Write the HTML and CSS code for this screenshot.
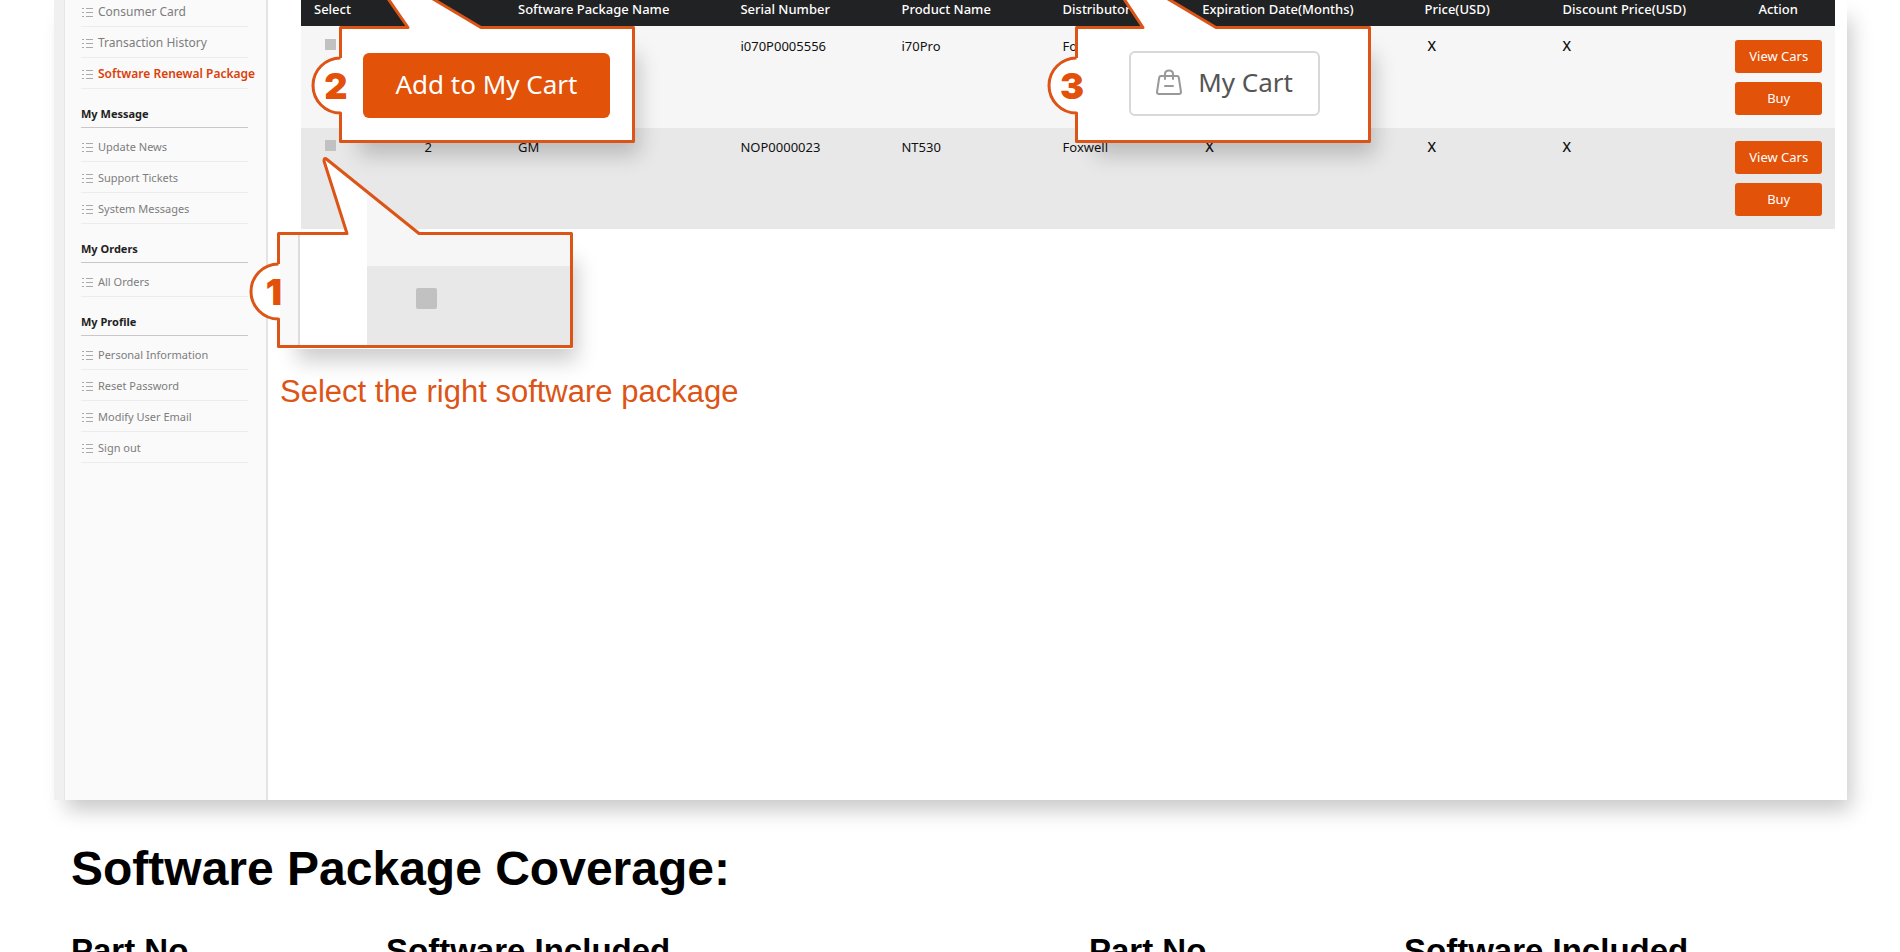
FILE: index.html
```
<!DOCTYPE html>
<html lang="en">
<head>
  <meta charset="UTF-8">
  <meta name="viewport" content="width=device-width, initial-scale=1.0">
  <title>Software Renewal Package</title>
  <link rel="stylesheet" href="styles.css">
</head>
<body>

  <!-- list icon shared by all sidebar links -->
  <svg class="sprite" width="0" height="0">
    <symbol id="list" viewBox="0 0 11 10">
      <path d="M0 1.500h2M0 5.500h2M0 9.500h2M4 1.500h7M4 5.500h7M4 9.500h7" fill="none" stroke="#aaa" stroke-width="1"/>
    </symbol>
  </svg>

  <div class="panel">
    <nav class="sidebar">
      <ul class="large">
        <li><a href="#"><svg><use href="#list"/></svg>Consumer Card</a></li>
        <li><a href="#"><svg><use href="#list"/></svg>Transaction History</a></li>
        <li><a href="#" class="active"><svg><use href="#list"/></svg>Software Renewal Package</a></li>
      </ul>
      <h3>My Message</h3>
      <ul>
        <li><a href="#"><svg><use href="#list"/></svg>Update News</a></li>
        <li><a href="#"><svg><use href="#list"/></svg>Support Tickets</a></li>
        <li><a href="#"><svg><use href="#list"/></svg>System Messages</a></li>
      </ul>
      <h3>My Orders</h3>
      <ul>
        <li><a href="#"><svg><use href="#list"/></svg>All Orders</a></li>
      </ul>
      <h3>My Profile</h3>
      <ul>
        <li><a href="#"><svg><use href="#list"/></svg>Personal Information</a></li>
        <li><a href="#"><svg><use href="#list"/></svg>Reset Password</a></li>
        <li><a href="#"><svg><use href="#list"/></svg>Modify User Email</a></li>
        <li><a href="#"><svg><use href="#list"/></svg>Sign out</a></li>
      </ul>
    </nav>

    <main class="content">
      <table class="packages">
        <colgroup>
          <col class="c-select"><col class="c-num"><col class="c-name"><col class="c-serial"><col class="c-product">
          <col class="c-dist"><col class="c-exp"><col class="c-price"><col class="c-discount"><col class="c-action">
        </colgroup>
        <thead>
          <tr>
            <th>Select</th>
            <th></th>
            <th>Software Package Name</th>
            <th>Serial Number</th>
            <th>Product Name</th>
            <th>Distributor</th>
            <th>Expiration Date(Months)</th>
            <th>Price(USD)</th>
            <th>Discount Price(USD)</th>
            <th class="action">Action</th>
          </tr>
        </thead>
        <tbody>
          <tr>
            <td><input type="checkbox" aria-label="Select package 1"></td>
            <td></td>
            <td></td>
            <td>i070P0005556</td>
            <td>i70Pro</td>
            <td>Foxwell</td>
            <td></td>
            <td class="value">X</td>
            <td class="value last">X</td>
            <td class="action"><button>View Cars</button><button>Buy</button></td>
          </tr>
          <tr>
            <td><input type="checkbox" aria-label="Select package 2"></td>
            <td>2</td>
            <td>GM</td>
            <td>NOP0000023</td>
            <td>NT530</td>
            <td>Foxwell</td>
            <td class="value">X</td>
            <td class="value">X</td>
            <td class="value last">X</td>
            <td class="action"><button>View Cars</button><button>Buy</button></td>
          </tr>
        </tbody>
      </table>
      <p class="hint">Select the right software package</p>
    </main>

    <!-- step callouts, they lie over the table -->
    <div class="callout step-1">
      <svg class="shape" width="296" height="116">
        <path d="M1.500 1.500H70L47-71Q47-75 50-72.500L142 1.500H294.500V114.500H1.500V87A27 27 0 0 1 1.500 32Z" fill="#fff"/>
        <path d="M3 3H21V113H3Z" fill="#f9f9f9"/>
        <path d="M22 3V113" stroke="#ddd" stroke-width="2"/>
        <path d="M90-39L142 2H293V34H90Z" fill="#f6f6f6"/>
        <path d="M90 34H293V113H90Z" fill="#e8e8e8"/>
        <path class="line" d="M1.500 32V1.500H70L47-71Q47-75 50-72.500L142 1.500H294.500V114.500H1.500V87A27 27 0 0 1 1.500 32"/>
      </svg>
      <span class="number">1</span>
      <input type="checkbox" aria-label="Select">
    </div>

    <div class="callout step-2">
      <svg class="shape" width="296" height="117">
        <path class="line fill" d="M1.500 32V1.500H69L43-36H79L142 1.500H294.500V115.500H1.500V87A27 27 0 0 1 1.500 32"/>
      </svg>
      <span class="number">2</span>
      <button class="add">Add to My Cart</button>
    </div>

    <div class="callout step-3">
      <svg class="shape" width="296" height="117">
        <path class="line fill" d="M1.500 32V1.500H68L43-36H78L141 1.500H294.500V115.500H1.500V87A27 27 0 0 1 1.500 32"/>
      </svg>
      <span class="number">3</span>
      <button class="cart">
        <svg width="26" height="27" viewBox="0 0 26 27" fill="none" stroke="#999" stroke-width="2" stroke-linecap="round" stroke-linejoin="round">
          <path d="M5 7H21Q22.500 7 22.800 8.500L25 23Q25 25 23 25H3Q1 25 1 23L3.200 8.500Q3.500 7 5 7Z"/>
          <path d="M9 10V5Q9 1.500 13 1.500T17 5V10M9 17H17"/>
        </svg>
        My Cart
      </button>
    </div>
  </div>

  <section class="coverage">
    <h2>Software Package Coverage:</h2>
    <div class="parts">
      <table>
        <tr><th class="part">Part No</th><th>Software Included</th></tr>
      </table>
      <table>
        <tr><th class="part">Part No</th><th>Software Included</th></tr>
      </table>
    </div>
  </section>

</body>
</html>
```

FILE: styles.css
```
* {
  margin: 0;
  padding: 0;
  box-sizing: border-box;
}

body {
  font-family: 'Noto Sans', 'Open Sans', sans-serif;
  background: #fff;
  color: #111;
}

.sprite {
  position: absolute;
}

a {
  text-decoration: none;
}

button {
  font-family: inherit;
  border: none;
  cursor: pointer;
}

.panel {
  position: relative;
  display: flex;
  min-height: 800px;
  margin: 0 53px 0 54px;
  background: #fff;
  border-left: 10px solid #f0f0f0;
  box-shadow: 8px 14px 20px -4px rgba(0, 0, 0, 0.22);
}

/* sidebar */
.sidebar {
  flex: none;
  width: 204px;
  padding: 0 18px 0 16px;
  background: #fafafa;
  border-left: 1px solid #e6e6e6;
  border-right: 2px solid #e4e4e4;
}

.sidebar ul {
  list-style: none;
  padding-top: 3px;
}

.sidebar ul.large {
  padding-top: 0;
  margin-top: -4px;
}

.sidebar li {
  height: 31px;
  border-bottom: 1px solid #ececec;
}

.sidebar a {
  display: flex;
  align-items: center;
  gap: 5px;
  height: 31px;
  padding-left: 1px;
  font-size: 11px;
  color: #7d7d7d;
  white-space: nowrap;
}

.sidebar .large a {
  font-size: 12px;
}

.sidebar svg {
  flex: none;
  width: 11px;
  height: 10px;
}

.sidebar .large a.active {
  font-weight: 600;
  color: #db3f0a;
}

.sidebar h3 {
  height: 39px;
  padding-top: 16px;
  font-size: 11px;
  line-height: 18px;
  color: #222;
  border-bottom: 1px solid #c8c8c8;
}

/* table */
.content {
  flex: 1;
  padding: 0 12px 0 33px;
}

.packages {
  width: 100%;
  table-layout: fixed;
  border-collapse: collapse;
  font-size: 13px;
}

.c-select { width: 7.2%; }
.c-num { width: 6.1%; }
.c-name { width: 14.5%; }
.c-serial { width: 10.5%; }
.c-product { width: 10.5%; }
.c-dist { width: 9.1%; }
.c-exp { width: 14.5%; }
.c-price { width: 9%; }
.c-discount { width: 11.2%; }
.c-action { width: 7.4%; }

.packages th {
  height: 26px;
  padding: 0 0 7px 13px;
  font-weight: 500;
  line-height: 19px;
  text-align: left;
  white-space: nowrap;
  color: #fff;
  background: #212223;
}

.packages td {
  height: 102px;
  padding: 10px 0 0 13px;
  line-height: 20px;
  vertical-align: top;
  background: #f6f6f6;
}

.packages tr:nth-child(2) td {
  height: 101px;
  padding-top: 9px;
  background: #e8e8e8;
}

.packages .value {
  padding-left: 16px;
  font-size: 14px;
  font-weight: 500;
}

.packages .last {
  padding-left: 13px;
}

.packages th.action {
  padding-left: 0;
  text-align: center;
}

.packages td.action,
.packages tr:nth-child(2) td.action {
  padding: 14px 13px 0 14px;
}

.packages tr:nth-child(2) td.action {
  padding-top: 13px;
}

.packages td button {
  display: block;
  width: 100%;
  height: 33px;
  margin-bottom: 9px;
  padding-bottom: 1px;
  border-radius: 3px;
  font-size: 13px;
  color: #fff;
  background: #e25209;
}

input[type="checkbox"] {
  appearance: none;
  display: block;
  width: 11px;
  height: 11px;
  margin: 3px 0 0 11px;
  background: #c1c1c1;
}

.hint {
  margin: 145px 0 0 -21px;
  font-family: 'Liberation Sans', Arial, sans-serif;
  font-size: 31px;
  line-height: 36px;
  color: #dc5416;
}

/* callouts */
.callout {
  position: absolute;
  width: 296px;
  height: 117px;
  box-shadow: 12px 20px 20px -8px rgba(0, 0, 0, 0.2);
}

.callout .shape {
  position: absolute;
  top: 0;
  left: 0;
  overflow: visible;
}

.callout .line {
  fill: none;
  stroke: #dc5416;
  stroke-width: 3;
  stroke-linejoin: round;
}

.callout .fill {
  fill: #fff;
}

.callout .number {
  position: absolute;
  top: 36px;
  left: -15px;
  width: 24px;
  font-family: Inter, 'Liberation Sans', sans-serif;
  font-size: 36px;
  font-weight: 900;
  line-height: 48px;
  text-align: center;
  color: #e2500a;
}

.step-1 {
  top: 232px;
  left: 213px;
}

.step-1 input[type="checkbox"] {
  position: absolute;
  top: 56px;
  left: 139px;
  width: 21px;
  height: 21px;
  margin: 0;
  border-radius: 2px;
}

.step-2 {
  top: 26px;
  left: 275px;
}

.step-3 {
  top: 26px;
  left: 1011px;
}

.callout button {
  position: absolute;
  height: 65px;
  padding-bottom: 3px;
  border-radius: 6px;
  font-size: 26px;
  white-space: nowrap;
}

.callout .add {
  top: 27px;
  left: 24px;
  width: 247px;
  color: #fff;
  background: #e25209;
}

.callout .cart {
  top: 25px;
  left: 54px;
  display: flex;
  align-items: center;
  justify-content: center;
  gap: 16px;
  width: 191px;
  color: #555;
  background: #fff;
  border: 2px solid #d8d8d8;
}

/* coverage */
.coverage {
  padding: 41px 53px 0 71px;
  font-family: 'Liberation Sans', Arial, sans-serif;
  color: #000;
}

.coverage h2 {
  font-size: 48px;
  line-height: 56px;
}

.parts {
  display: grid;
  grid-template-columns: 1fr 1fr;
  gap: 260px;
  margin-top: 34px;
}

.parts table {
  border-collapse: collapse;
}

.parts th {
  font-size: 33px;
  line-height: 40px;
  text-align: left;
}

.parts .part {
  width: 315px;
}
```
